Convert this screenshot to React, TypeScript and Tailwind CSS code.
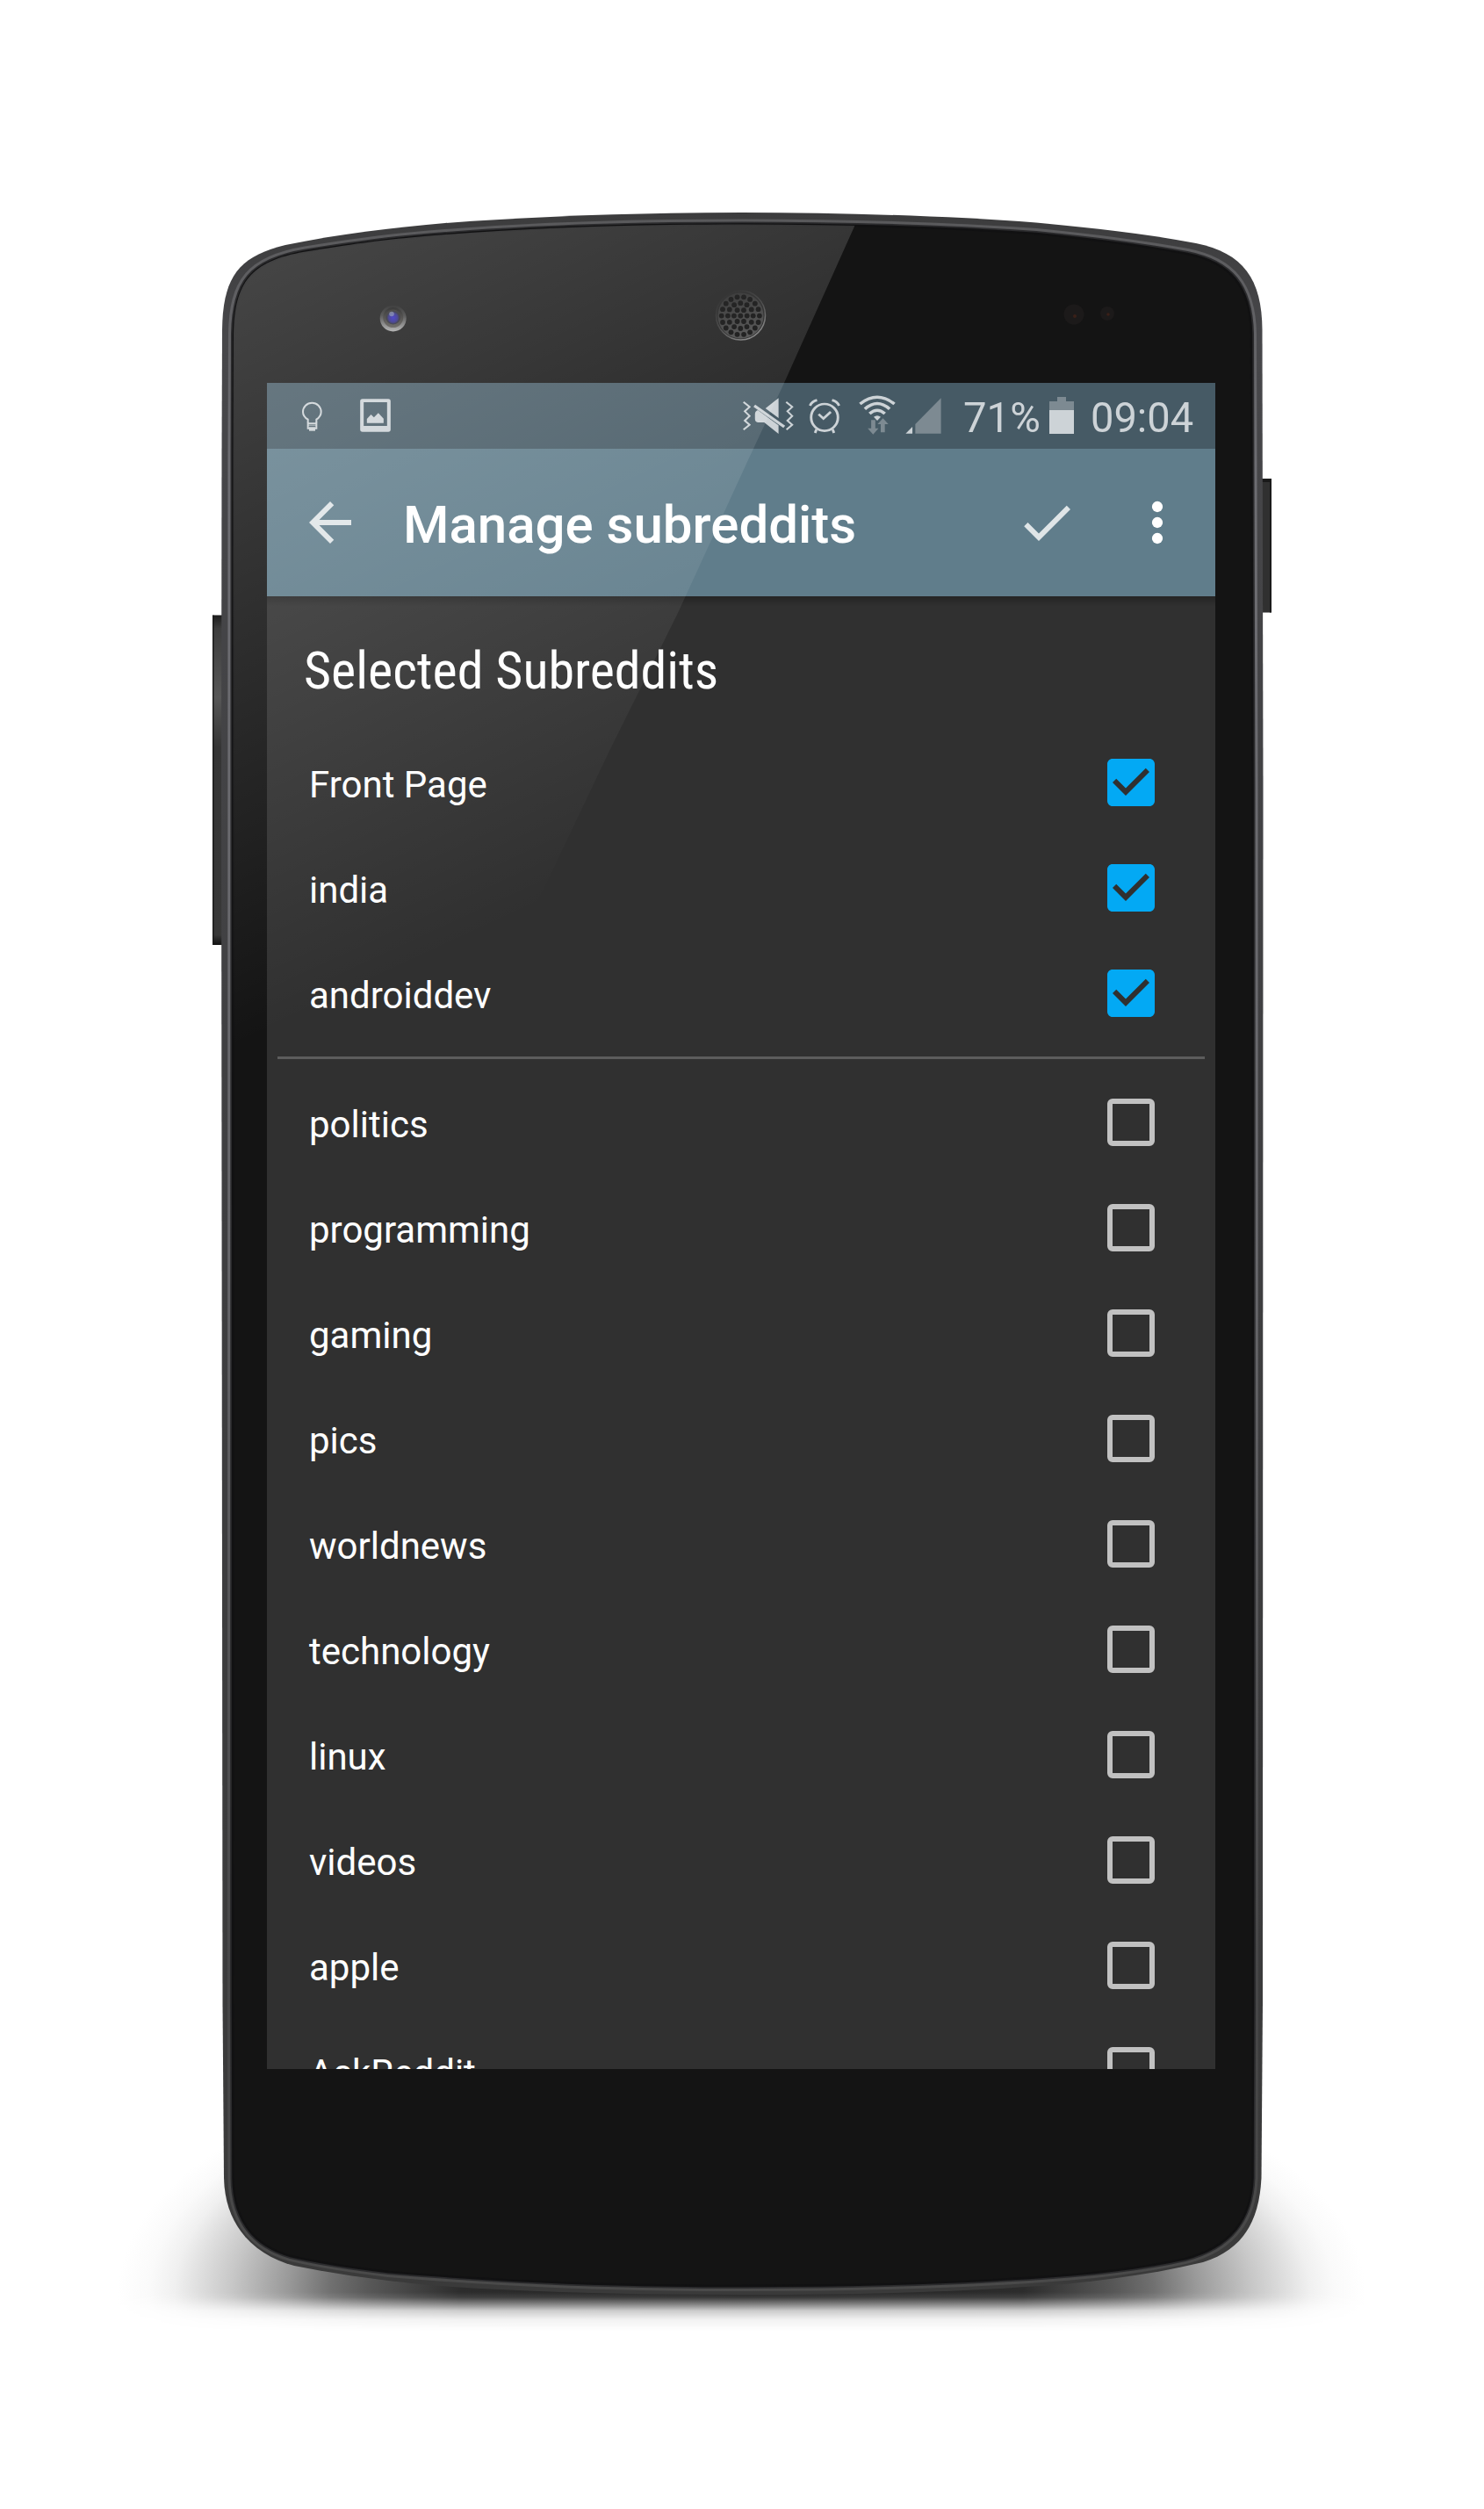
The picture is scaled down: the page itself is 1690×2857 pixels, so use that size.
const SELECTED = ["Front Page", "india", "androiddev"];
const AVAILABLE = [
  "politics",
  "programming",
  "gaming",
  "pics",
  "worldnews",
  "technology",
  "linux",
  "videos",
  "apple",
  "AskReddit",
];

const BODY =
  "M252.500 520 L253 375 C254 315 272 292 325 279 C388 266 450 259 507 254 C610 246 730 242 845 242 C960 242 1080 246 1180 253.500 C1248 260 1305 266 1362 277 C1416 288 1437 318 1437.500 375 L1438.500 900 L1438 2280 L1436.500 2480 C1434 2530 1415 2562 1370 2576 C1320 2588 1270 2595 1217 2600.500 C1100 2610 980 2613 845 2613 C720 2613 600 2610 487 2602 C430 2596 385 2590 335 2580 C290 2568 256 2535 255 2480 L253.500 2280 L252 900 Z";
const GLASS =
  "M265.500 520 L266 380 C267 322 285 297 348 286.500 C400 278 430 274 467 270.500 C590 259 730 255.500 845 255.500 C960 255.500 1080 259 1180 266 C1250 273 1310 281 1352 289 C1402 299 1424 326 1425 380 L1426.500 900 L1427 2280 L1426.500 2480 C1425 2525 1404 2558 1350 2572 C1310 2581 1270 2586 1218 2590.500 C1100 2600 980 2603 845 2603 C700 2603 590 2599 442 2587 C400 2582 370 2578 331 2569 C285 2556 266 2525 265.500 2480 L265 2280 Z";

const HOLES = [
  { r: 0, n: 1 },
  { r: 7.4, n: 6 },
  { r: 14.4, n: 12 },
  { r: 21.6, n: 18 },
].flatMap(({ r, n }) =>
  Array.from({ length: n }, (_, i) => {
    const a = (i / n) * Math.PI * 2;
    return [843.3 + r * Math.cos(a), 359.6 + r * Math.sin(a)];
  }),
);

function PhoneBody() {
  return (
    <svg className="absolute inset-0" width="1690" height="2857" viewBox="0 0 1690 2857">
      <defs>
        <linearGradient id="rim" x1="0" y1="242" x2="0" y2="2613" gradientUnits="userSpaceOnUse">
          <stop offset="0" stopColor="#3c3c3d" />
          <stop offset="0.06" stopColor="#47474a" />
          <stop offset="0.5" stopColor="#3e3e40" />
          <stop offset="1" stopColor="#3a3a3a" />
        </linearGradient>
        <linearGradient id="shine" x1="0" y1="242" x2="0" y2="2613" gradientUnits="userSpaceOnUse">
          <stop offset="0" stopColor="#59595b" />
          <stop offset="0.12" stopColor="#6d6d72" />
          <stop offset="0.5" stopColor="#68686c" />
          <stop offset="0.85" stopColor="#464647" />
          <stop offset="1" stopColor="#4a4a4a" />
        </linearGradient>
        <linearGradient id="key" x1="0" y1="0" x2="0" y2="1">
          <stop offset="0" stopColor="#1c1c1c" />
          <stop offset="0.04" stopColor="#3d3d3d" />
          <stop offset="0.25" stopColor="#565656" />
          <stop offset="0.4" stopColor="#353535" />
          <stop offset="0.97" stopColor="#383838" />
          <stop offset="1" stopColor="#111" />
        </linearGradient>
        <radialGradient id="lens" cx="0.5" cy="0.55" r="0.5">
          <stop offset="0" stopColor="#2c22c0" />
          <stop offset="0.6" stopColor="#28247e" />
          <stop offset="0.85" stopColor="#22222e" />
          <stop offset="1" stopColor="#2a2826" />
        </radialGradient>
        <linearGradient id="ring" x1="0" y1="0" x2="0" y2="1">
          <stop offset="0" stopColor="#161616" />
          <stop offset="0.4" stopColor="#3a3a3a" />
          <stop offset="1" stopColor="#a8a8a8" />
        </linearGradient>
        <linearGradient id="ringInner" x1="0" y1="0" x2="0" y2="1">
          <stop offset="0" stopColor="#101010" />
          <stop offset="1" stopColor="#55524e" />
        </linearGradient>
        <linearGradient id="mesh" x1="0" y1="0" x2="0.3" y2="1">
          <stop offset="0" stopColor="#1c1c1c" />
          <stop offset="1" stopColor="#404040" />
        </linearGradient>
        <linearGradient id="meshRim" x1="0" y1="0" x2="0.6" y2="1">
          <stop offset="0" stopColor="#0a0a0a" />
          <stop offset="0.6" stopColor="#333" />
          <stop offset="1" stopColor="#777" />
        </linearGradient>
      </defs>
      <rect x="242" y="700.500" width="12" height="375.500" rx="1" fill="url(#key)" />
      <rect x="242" y="700.500" width="1.500" height="375.500" fill="#1a1a1a" />
      <rect x="1436" y="545" width="12" height="152.500" rx="1" fill="#303030" />
      <rect x="1446" y="545" width="2" height="152.500" fill="#1a1a1a" />
      <rect x="1436" y="545" width="12" height="4" fill="#1a1a1a" />
      <path d={BODY} fill="url(#rim)" />
      <path d={GLASS} fill="#141414" stroke="url(#shine)" strokeWidth="12" />
      <path d={GLASS} fill="#141414" stroke="#2b2b2d" strokeWidth="6" />
      <path d={GLASS} fill="#141414" stroke="#111112" strokeWidth="2.500" />
      <circle cx="447.700" cy="362.500" r="15" fill="url(#ring)" />
      <circle cx="447.700" cy="361.500" r="11.500" fill="url(#ringInner)" />
      <circle cx="447.700" cy="361" r="8.500" fill="url(#lens)" />
      <circle cx="446" cy="357.500" r="2.800" fill="#8a97b0" opacity="0.6" />
      <circle cx="843.500" cy="359" r="28" fill="#161616" stroke="url(#meshRim)" strokeWidth="1.500" />
      <circle cx="843.500" cy="359.500" r="26" fill="url(#mesh)" />
      {HOLES.map(([x, y]) => (
        <circle key={`${x}-${y}`} cx={x} cy={y} r="2.900" fill="#020202" />
      ))}
      <circle cx="1223" cy="358" r="11.500" fill="#1c1a1a" />
      <circle cx="1224" cy="360" r="2" fill="#3a2018" />
      <circle cx="1261" cy="357" r="8" fill="#1c1a1a" />
      <circle cx="1262" cy="358" r="1.800" fill="#3a2018" />
    </svg>
  );
}

function Glare() {
  return (
    <svg
      className="pointer-events-none absolute inset-0"
      width="1690"
      height="2857"
      viewBox="0 0 1690 2857"
    >
      <defs>
        <linearGradient id="glare" x1="265" y1="280" x2="614" y2="1035" gradientUnits="userSpaceOnUse">
          <stop offset="0" stopColor="#fff" stopOpacity="0.215" />
          <stop offset="1" stopColor="#fff" stopOpacity="0" />
        </linearGradient>
        <clipPath id="glass">
          <path d={GLASS} />
        </clipPath>
      </defs>
      <path
        clipPath="url(#glass)"
        fill="url(#glare)"
        d="M250 240 H981 L893 436 L850 528 L771 700 L693 857 L614 1023 L600 1250 H250 Z"
      />
    </svg>
  );
}

function FloorShadow() {
  return (
    <div className="absolute top-[2310px] left-[135px] w-[1420px]">
      <div className="h-[300px] bg-[radial-gradient(ellipse_710px_300px_at_50%_100%,#222_0%,#2c2c2c_45%,#585858_60%,#707070_66%,#9a9a9a_73%,#c8c8c8_82%,#dedede_87%,#f0f0f0_91%,#fafafa_95%,#fff_100%)]" />
      <div className="h-[44px] bg-[linear-gradient(90deg,#fff_0%,#fafafa_2.5%,#f0f0f0_4.5%,#dedede_6.5%,#c8c8c8_9%,#9a9a9a_13.5%,#707070_17%,#585858_20%,#2c2c2c_27.5%,#222_50%,#2c2c2c_72.5%,#585858_80%,#707070_83%,#9a9a9a_86.5%,#c8c8c8_91%,#dedede_93.5%,#f0f0f0_95.5%,#fafafa_97.5%,#fff_100%)] [mask-image:linear-gradient(180deg,#000_0%,rgba(0,0,0,0.9)_14%,rgba(0,0,0,0.56)_32%,rgba(0,0,0,0.24)_48%,rgba(0,0,0,0.06)_72%,transparent_100%)]" />
    </div>
  );
}

function StatusBar() {
  return (
    <div className="flex h-[75px] items-start bg-[#465a65] text-[#cdd3d7]">
      <svg className="mt-[21px] ml-[40px] h-[34px] w-[23px]" viewBox="163 111 69 102" fill="none" stroke="currentColor" strokeWidth="6">
        <path d="M183 184 V173 C171 166 166 157 166 147 A31 31 0 0 1 228 147 C228 157 223 166 212 173 V184" />
        <path d="M183 182 V203 H212 V182 M183 187 H212" />
        <path d="M187 199 H208 V212 H187Z" fill="currentColor" stroke="none" />
        <path d="M184 193 H211" strokeWidth="2" />
      </svg>
      <svg className="mt-[18px] ml-[43px] h-[38px] w-[35px]" viewBox="361 103 104 114" fill="currentColor">
        <path fillRule="evenodd" d="M369 104 H457 Q465 104 465 112 V208 Q465 216 457 216 H369 Q361 216 361 208 V112 Q361 104 369 104 Z M373 115 V196 H453 V115 Z" />
        <path d="M384 186 V172 L398 157 L408 167 L423 152 L441 171 V186 Z" />
      </svg>
      <svg className="mt-[17px] ml-[401px] h-[42px] w-[58px]" viewBox="71 69 160 126" preserveAspectRatio="none" fill="currentColor">
        <path d="M73 83 L92 100 L77 115 L92 131 L77 147 L92 161 L73 178 M207 83 L226 100 L211 115 L226 131 L211 147 L226 161 L208 178" fill="none" stroke="currentColor" strokeWidth="6" />
        <path d="M183 70 V138 L142 105 Z" />
        <path d="M118 111 L183 163 V192 L138 153 H118 Q109 151 109 140 V125 Q109 114 118 111 Z" />
        <path d="M107 96 L201 168" stroke="currentColor" strokeWidth="9" />
      </svg>
      <svg className="mt-[18px] ml-[17px] h-[40px] w-[36px]" viewBox="274 73 99 120" preserveAspectRatio="none" fill="none" stroke="currentColor" strokeWidth="8">
        <ellipse cx="323.500" cy="137" rx="42" ry="46" />
        <path d="M305 126 L320 141 L343 118" />
        <path d="M278 97 Q284 82 300 78 M347 78 Q363 82 369 97" />
        <path d="M298 178 L294 190 M349 178 L353 190" />
      </svg>
      <svg className="mt-[14px] ml-[21px] h-[45px] w-[42px]" viewBox="430 62 116 135" preserveAspectRatio="none" fill="none">
        <g stroke="currentColor" strokeWidth="10">
          <path d="M434 92 Q488 46 542 92" />
          <path d="M449 109 Q488 72 527 109" />
          <path d="M464 125 Q488 102 512 125" />
        </g>
        <path d="M477 136 Q488 127 499 136 L488 149 Z" fill="currentColor" />
        <path d="M469 147 H482 V175 H492 L475 196 L458 175 H469 Z M499 189 H512 V161 H523 L506 141 L489 161 H499 Z" fill="#7d8a92" />
      </svg>
      <svg className="mt-[17px] ml-[11px] h-[41px] w-[41px]" viewBox="576 69 112 123" preserveAspectRatio="none">
        <path d="M607 191 V159 L687 70 V191 Z" fill="#7d8a92" />
        <path d="M577 191 L598 168 V191 Z" fill="currentColor" />
      </svg>
      <span className="mt-[11px] ml-[25px] w-[98px] text-[48px] leading-[58px] whitespace-nowrap">
        <span className="inline-block origin-left scale-x-[0.985]">71%</span>
      </span>
      <div className="mt-[16px] flex w-[28px] flex-col items-center">
        <div className="h-[5px] w-[10px] bg-[#7d8a92]" />
        <div className="h-[10px] w-full bg-[#7d8a92]" />
        <div className="h-[27px] w-full bg-[#cdd3d7]" />
      </div>
      <span className="mt-[11px] ml-[19px] origin-left scale-x-[0.98] text-[48px] leading-[58px] whitespace-nowrap">09:04</span>
    </div>
  );
}

function Toolbar() {
  return (
    <div className="flex h-[168px] items-center bg-[#607d8b] pl-[36px] text-white">
      <svg className="size-[72px] opacity-80" viewBox="0 0 24 24" fill="currentColor">
        <path d="M20 11H7.830l5.590-5.590L12 4l-8 8 8 8 1.410-1.410L7.830 13H20v-2z" />
      </svg>
      <h1 className="ml-[47px] flex-1 pt-[5px] text-[60px] leading-[70px] font-medium whitespace-nowrap">Manage subreddits</h1>
      <svg className="size-[72px] opacity-80" viewBox="0 0 24 24" fill="currentColor">
        <path d="M9 16.170L4.830 12l-1.420 1.410L9 19 21 7l-1.410-1.410z" />
      </svg>
      <svg className="mr-[30px] ml-[54px] size-[72px]" viewBox="0 0 24 24" fill="currentColor">
        <circle cx="12" cy="6" r="2.050" />
        <circle cx="12" cy="12" r="2.050" />
        <circle cx="12" cy="18" r="2.050" />
      </svg>
    </div>
  );
}

function Row({ name, checked }: { name: string; checked: boolean }) {
  return (
    <li className="flex h-[120px] items-center justify-between pr-[60px] pl-[48px]">
      <span className="pt-[6px] text-[42px] leading-[48px]">{name}</span>
      {checked ? (
        <svg className="size-[72px]" viewBox="0 0 24 24" fill="#03a9f4">
          <path d="M19 3H5c-1.110 0-2 .9-2 2v14c0 1.100.89 2 2 2h14c1.110 0 2-.9 2-2V5c0-1.100-.89-2-2-2zm-9 14l-5-5 1.410-1.410L10 14.170l7.590-7.590L19 8l-9 9z" />
        </svg>
      ) : (
        <span className="m-[9px] size-[54px] rounded-[6px] border-6 border-[#c1c1c1]" />
      )}
    </li>
  );
}

export default function App() {
  return (
    <div className="relative h-[2857px] w-[1690px] overflow-hidden bg-white pt-[436px] pl-[304px] font-[Roboto,sans-serif]">
      <FloorShadow />
      <PhoneBody />
      <main className="relative h-[1920px] w-[1080px] overflow-hidden bg-[#303030] text-white">
        <StatusBar />
        <Toolbar />
        <div className="-mb-[12px] h-[12px] bg-linear-to-b from-black/25 to-transparent" />
        <h2 className="pt-[50px] pb-[32px] pl-[42px] font-['Roboto_Condensed',Roboto,sans-serif] text-[60px] leading-[70px] whitespace-nowrap">
          Selected Subreddits
        </h2>
        <ul>
          {SELECTED.map((name) => (
            <Row key={name} name={name} checked />
          ))}
        </ul>
        <hr className="mx-[12px] my-[12px] h-[3px] border-0 bg-[#5c5c5c]" />
        <ul>
          {AVAILABLE.map((name) => (
            <Row key={name} name={name} checked={false} />
          ))}
        </ul>
      </main>
      <Glare />
    </div>
  );
}
